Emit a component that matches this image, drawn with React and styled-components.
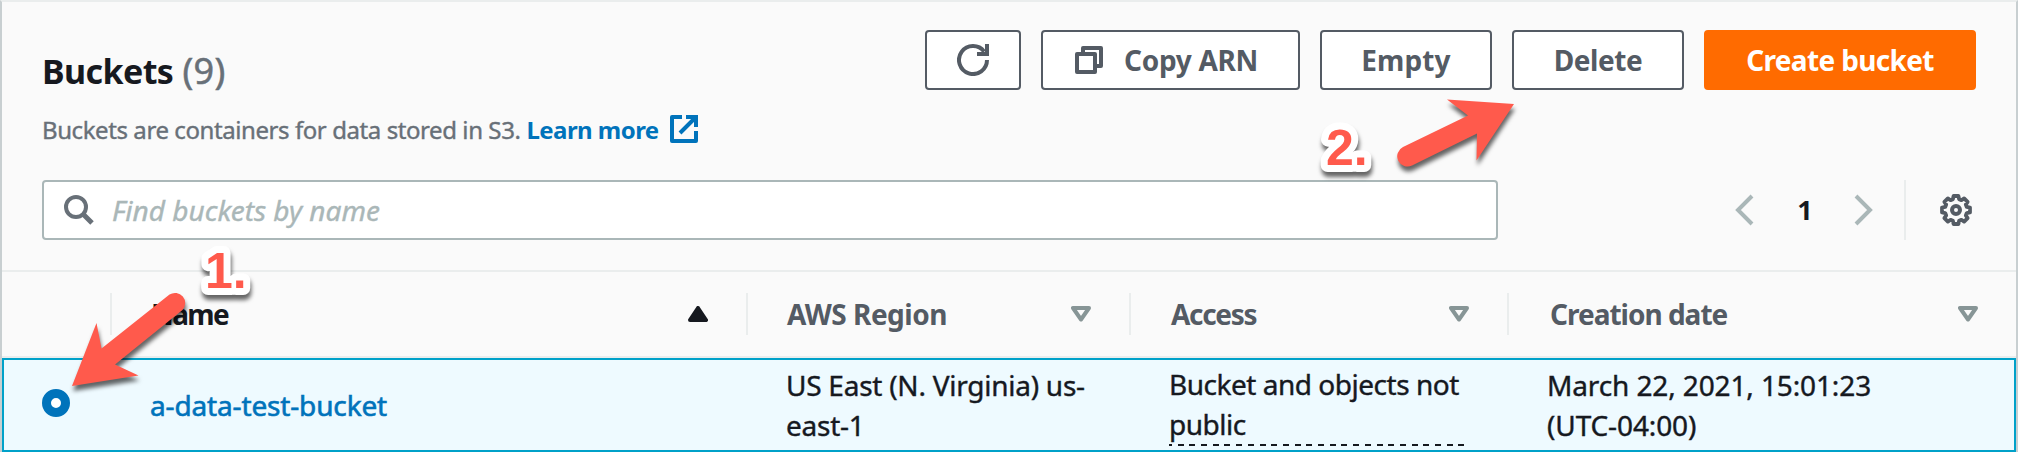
import React from "react";
import styled, { createGlobalStyle } from "styled-components";

const GlobalStyle = createGlobalStyle`
  *, *::before, *::after { box-sizing: border-box; }
  body { margin: 0; background: #fafafa; }
  button, input { font: inherit; }
`;

const Panel = styled.main`
  position: relative;
  width: 2018px;
  height: 452px;
  overflow: hidden;
  background: #fafafa;
  border-top: 2px solid #eaeded;
  border-left: 2px solid #c8cfd1;
  border-right: 2px solid #c8cfd1;
  font-family: "Noto Sans", "Open Sans", sans-serif;
  font-size: 28px;
  line-height: 40px;
  color: #16191f;
`;

const Header = styled.header`
  display: flex;
  justify-content: space-between;
  align-items: flex-start;
  height: 178px;
  padding: 28px 40px 0;
`;

const Heading = styled.div`
  padding-top: 19px;
`;

const Title = styled.h1`
  margin: 0;
  font-size: 34px;
  line-height: 44px;
  font-weight: 700;
  letter-spacing: -0.6px;
  white-space: nowrap;
`;

const Count = styled.span`
  margin-left: 1px;
  font-size: 36px;
  line-height: 1;
  font-weight: 400;
  letter-spacing: 0.3px;
  color: #687078;
  -webkit-text-stroke: 0.5px currentColor;
`;

const Description = styled.p`
  display: flex;
  align-items: center;
  margin: 19px 0 0;
  font-size: 24px;
  line-height: 36px;
  letter-spacing: -0.42px;
  color: #687078;
  white-space: nowrap;
  -webkit-text-stroke: 0.4px currentColor;
`;

const InfoLink = styled.a`
  display: flex;
  align-items: center;
  gap: 11px;
  margin-left: 6px;
  color: #0073bb;
  font-weight: 700;
  letter-spacing: -0.55px;
  text-decoration: none;
  -webkit-text-stroke: 0;

  svg { margin-top: -2px; }
`;

const Actions = styled.div`
  display: flex;
  gap: 20px;
`;

const Button = styled.button`
  display: flex;
  align-items: center;
  justify-content: center;
  gap: 21px;
  width: ${(p) => p.$width}px;
  height: 60px;
  padding: 0 ${(p) => p.$trail || 0}px 0 0;
  border: 2px solid ${(p) => (p.$primary ? "#ff6b00" : "#545b64")};
  border-radius: 4px;
  background: ${(p) => (p.$primary ? "#ff6b00" : "#fff")};
  color: ${(p) => (p.$primary ? "#fff" : "#545b64")};
  font-weight: 700;
  letter-spacing: ${(p) => p.$spacing || 0}px;
  white-space: nowrap;
`;

const Toolbar = styled.div`
  display: flex;
  justify-content: space-between;
  height: 90px;
  padding: 0 40px;
`;

const SearchBox = styled.label`
  display: flex;
  align-items: center;
  gap: 18px;
  width: 1456px;
  height: 60px;
  padding-left: 20px;
  background: #fff;
  border: 2px solid #aab7b8;
  border-radius: 4px;
`;

const SearchInput = styled.input`
  flex: 1;
  height: 52px;
  padding: 0;
  border: 0;
  outline: 0;
  background: transparent;
  &::placeholder {
    color: #aab7b8;
    font-style: italic;
    opacity: 1;
    -webkit-text-stroke: 0.4px currentColor;
  }
`;

const Pager = styled.nav`
  display: flex;
  align-items: center;
  height: 60px;
`;

const PageNumber = styled.span`
  width: 100px;
  padding-left: 2px;
  text-align: center;
  font-weight: 700;
  font-size: 27px;
`;

const Settings = styled.div`
  display: flex;
  align-items: center;
  justify-content: flex-end;
  width: 72px;
  height: 60px;
  margin-left: 31px;
  padding-right: 4px;
  border-left: 2px solid #eaeded;
`;

const TableRow = styled.div`
  display: grid;
  grid-template-columns: 110px 636px 383px 378px 1fr;
`;

const HeadRow = styled(TableRow)`
  align-items: center;
  height: 88px;
  border-top: 2px solid #eaeded;
  border-bottom: 2px solid #eaeded;
`;

const HeadCell = styled.div`
  display: flex;
  align-items: center;
  justify-content: space-between;
  height: 42px;
  padding: 0 38px 0 ${(p) => p.$inset || 39}px;
  border-right: ${(p) => (p.$last ? 0 : "2px solid #eaeded")};
  color: ${(p) => (p.$sorted ? "#16191f" : "#545b64")};
  font-weight: 700;
  letter-spacing: ${(p) => p.$spacing || 0}px;
`;

const SelectedRow = styled(TableRow)`
  align-items: center;
  height: 94px;
  background: #eefaff;
  box-shadow: inset 0 0 0 2px #00a1c9;
`;

const Cell = styled.div`
  padding-left: 38px;
  letter-spacing: ${(p) => p.$spacing || 0}px;
  white-space: nowrap;
  -webkit-text-stroke: 0.4px currentColor;
`;

const RadioCell = styled.div`
  padding: 0 0 4px 40px;
`;

const Radio = styled.span`
  display: block;
  width: 28px;
  height: 28px;
  border: 9px solid #0073bb;
  border-radius: 50%;
  background: #fff;
`;

const BucketLink = styled.a`
  color: #0073bb;
  text-decoration: none;
  -webkit-text-stroke: 0.6px currentColor;
`;

const AccessNote = styled.span`
  display: block;
  width: 298px;
  padding-bottom: 2px;
  background: repeating-linear-gradient(90deg, #16191f 0 6px, transparent 6px 11.7px) -3px 100% / 310px 2px no-repeat;
`;

const Annotations = styled.svg`
  position: absolute;
  left: -2px;
  top: -2px;
  pointer-events: none;

  path, text {
    filter: drop-shadow(1px 5px 2px rgba(0, 0, 0, 0.6));
  }
`;

const StepLabel = styled.text`
  font: 700 50px "Liberation Sans", sans-serif;
  stroke: #fff;
  stroke-width: 14px;
  stroke-linejoin: round;
  paint-order: stroke fill;
`;

const Tint = styled.span`
  display: flex;
  color: ${(p) => p.$color};
`;

const Icon = ({ w, h = w, children }) => (
  <svg width={w} height={h} viewBox={`0 0 ${w} ${h}`} fill="none" stroke="currentColor" strokeWidth="4">
    {children}
  </svg>
);

const RefreshIcon = () => (
  <Icon w={32}>
    <path d="M30 16A14 14 0 1 1 27.2 7.6" />
    <path d="M30 0V10H20" />
  </Icon>
);

const CopyIcon = () => (
  <Icon w={28}>
    <path d="M2 8H20V26H2ZM8 8V2H26V20H20" strokeLinejoin="round" />
  </Icon>
);

const ExternalIcon = () => (
  <Icon w={28}>
    <path d="M12 2H2V26H26V16" strokeLinejoin="round" />
    <path d="M16 2H26V12M26 2L10 18" />
  </Icon>
);

const SearchIcon = () => (
  <Icon w={30}>
    <circle cx="12" cy="12" r="10" />
    <path d="M19 19L28 28" strokeWidth="5" />
  </Icon>
);

const Chevron = ({ right }) => (
  <Icon w={19} h={32}>
    <path d={right ? "M2 2L16 16L2 30" : "M17 2L3 16L17 30"} />
  </Icon>
);

const gearPoints = Array.from({ length: 8 }, (_, i) =>
  [[-10, 14.2], [10, 14.2], [16, 11.2], [29, 11.2]].map(([offset, r]) => {
    const a = ((i * 45 + offset) * Math.PI) / 180;
    return `${(16 + r * Math.sin(a)).toFixed(2)},${(16 - r * Math.cos(a)).toFixed(2)}`;
  }).join(" ")
).join(" ");

const GearIcon = () => (
  <Icon w={32}>
    <polygon points={gearPoints} strokeLinejoin="round" strokeWidth="3.8" />
    <circle cx="16" cy="16" r="4" />
  </Icon>
);

const SortIcon = ({ active }) => (
  <Icon w={20} h={16}>
    {active ? (
      <path d="M10 2L18 14H2Z" fill="currentColor" strokeLinejoin="round" />
    ) : (
      <path d="M2 2H18L10 13.5Z" stroke="#879596" strokeLinejoin="round" />
    )}
  </Icon>
);

const columns = [
  { label: "Name", sorted: true, spacing: -1.6 },
  { label: "AWS Region", spacing: -0.5 },
  { label: "Access", spacing: -1.3, inset: 40 },
  { label: "Creation date", spacing: -1, inset: 41, last: true },
];

export default function App() {
  return (
    <>
      <GlobalStyle />
      <Panel>
        <Header>
          <Heading>
            <Title>
              Buckets <Count>(9)</Count>
            </Title>
            <Description>
              Buckets are containers for data stored in S3.
              <InfoLink>
                Learn more <ExternalIcon />
              </InfoLink>
            </Description>
          </Heading>
          <Actions>
            <Button $width={96} aria-label="Refresh"><RefreshIcon /></Button>
            <Button $width={259} $spacing={-0.3} $trail={8}><CopyIcon />Copy ARN</Button>
            <Button $width={172} $spacing={0.1}>Empty</Button>
            <Button $width={172} $spacing={-0.4}>Delete</Button>
            <Button $width={272} $spacing={-0.65} $primary>Create bucket</Button>
          </Actions>
        </Header>
        <Toolbar>
          <SearchBox>
            <Tint $color="#687078"><SearchIcon /></Tint>
            <SearchInput placeholder="Find buckets by name" />
          </SearchBox>
          <Pager>
            <Tint $color="#aab7b8"><Chevron /></Tint>
            <PageNumber>1</PageNumber>
            <Tint $color="#aab7b8"><Chevron right /></Tint>
            <Settings><Tint $color="#545b64"><GearIcon /></Tint></Settings>
          </Pager>
        </Toolbar>
        <HeadRow>
          <HeadCell />
          {columns.map((c) => (
            <HeadCell key={c.label} $sorted={c.sorted} $last={c.last} $inset={c.inset} $spacing={c.spacing}>
              {c.label}
              <SortIcon active={c.sorted} />
            </HeadCell>
          ))}
        </HeadRow>
        <SelectedRow>
          <RadioCell><Radio /></RadioCell>
          <Cell $spacing={-0.15}><BucketLink>a-data-test-bucket</BucketLink></Cell>
          <Cell $spacing={-0.25}>US East (N. Virginia) us-<br />east-1</Cell>
          <Cell $spacing={-0.48}>
            <AccessNote>Bucket and objects not<br />public</AccessNote>
          </Cell>
          <Cell $spacing={-0.12}>March 22, 2021, 15:01:23<br />(UTC-04:00)</Cell>
        </SelectedRow>
        <Annotations width="2018" height="452" viewBox="0 0 2018 452" fill="#ff5a4c">
          <path d="M72 386L96.5 323L101.5 348.5L169.5 294.5A10.2 10.2 0 0 1 182.5 310L115 364.5L138.5 375.5Z" />
          <path d="M1514 104L1447 99.5L1468 115.5L1403 147A10.2 10.2 0 0 0 1412 165.5L1477 133.5L1476.5 160.5Z" />
          <StepLabel x="205" y="288">1.</StepLabel>
          <StepLabel x="1326" y="165">2.</StepLabel>
        </Annotations>
      </Panel>
    </>
  );
}
